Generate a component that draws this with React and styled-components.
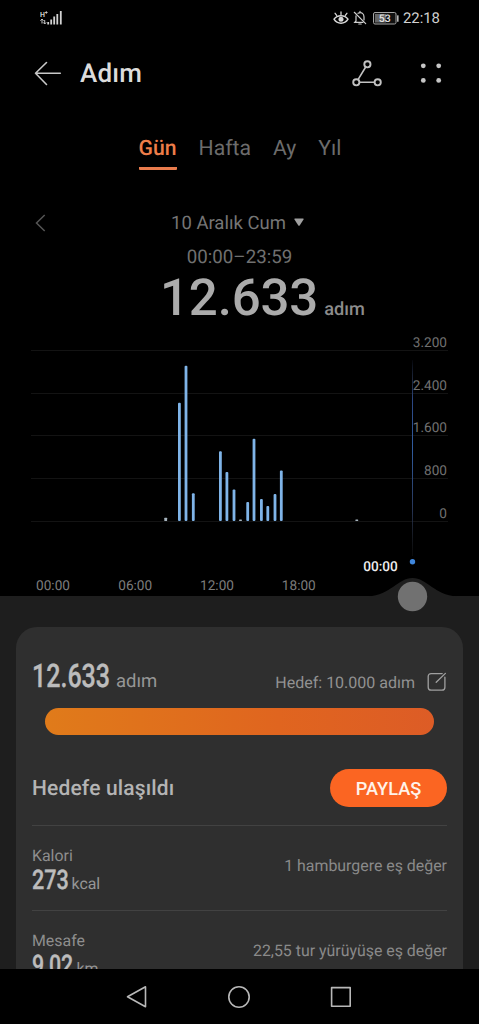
import React from "react";
import styled, { createGlobalStyle } from "styled-components";

const GlobalStyle = createGlobalStyle`
  * {
    box-sizing: border-box;
  }

  body {
    margin: 0;
    background: #000;
    font-family: Roboto, "Noto Sans", sans-serif;
    text-rendering: geometricPrecision;
  }

  svg {
    display: block;
    flex: none;
  }
`;

const Screen = styled.div`
  display: flex;
  flex-direction: column;
  width: 479px;
  height: 1024px;
  overflow: hidden;
  background: #000;
`;

const StatusBar = styled.div`
  display: flex;
  align-items: center;
  justify-content: space-between;
  flex: none;
  height: 36px;
  padding: 0 39px 0 40px;
`;

const StatusIcons = styled.div`
  display: flex;
  align-items: center;
`;

const Clock = styled.span`
  margin-left: 4px;
  font-size: 14.9px;
  line-height: 20px;
  color: #d2d2d2;
`;

const Header = styled.header`
  display: flex;
  align-items: center;
  flex: none;
  height: 76px;
  padding: 0 37px 0 34px;
`;

const Title = styled.h1`
  flex: 1;
  margin: 0 0 0 18px;
  font-size: 26px;
  font-weight: 500;
  letter-spacing: 0.2px;
  line-height: 32px;
  color: #dcdcdc;
`;

const HeaderActions = styled.div`
  display: flex;
  align-items: center;
  gap: 38px;
`;

const Tabs = styled.nav`
  display: flex;
  justify-content: center;
  flex: none;
  gap: 22px;
  height: 60px;
  padding: 22px 0 0 1px;
`;

const Tab = styled.a`
  height: 36px;
  padding-top: 1px;
  border-bottom: 3px solid ${(p) => (p.$active ? "#e97c4d" : "transparent")};
  border-radius: 1px;
  font-size: 21.2px;
  font-weight: ${(p) => (p.$active ? 500 : 400)};
  line-height: 27px;
  color: ${(p) => (p.$active ? "#ee7d49" : "#6c6c6c")};
`;

const DateRow = styled.div`
  display: flex;
  align-items: center;
  flex: none;
  height: 34px;
  margin-top: 34px;
  padding-left: 35px;
`;

const DateLabel = styled.div`
  display: flex;
  align-items: center;
  gap: 8px;
  margin-left: 125px;
  font-size: 18.5px;
  line-height: 24px;
  color: #757575;

  svg {
    margin-bottom: 2px;
  }
`;

const TimeRange = styled.div`
  flex: none;
  height: 34px;
  font-size: 18.7px;
  line-height: 34px;
  text-align: center;
  color: #707070;
`;

const Total = styled.div`
  display: flex;
  align-items: baseline;
  flex: none;
  height: 58px;
  padding-left: 160px;
  line-height: 50px;
`;

const TotalNumber = styled.span`
  font-size: 51px;
  font-weight: 500;
  letter-spacing: -0.15px;
  color: #ababab;
`;

const TotalUnit = styled.span`
  margin-left: 6px;
  font-size: 18.2px;
  font-weight: 500;
  color: #8c8c8c;
`;

const ChartSvg = styled.svg`
  position: relative;
  z-index: 1;
  overflow: visible;

  text {
    font-family: Roboto, "Noto Sans", sans-serif;
    font-size: 13.6px;
  }
`;

const Panel = styled.main`
  flex: 1;
  min-height: 0;
  padding: 31px 16px 0;
  overflow: hidden;
  background: #1e1e1e;
`;

const Card = styled.section`
  height: 400px;
  padding: 30px 16px 0;
  border-radius: 21px;
  background: #2f2f2f;
`;

const GoalRow = styled.div`
  display: flex;
  align-items: center;
  justify-content: space-between;
  height: 51px;
  padding-bottom: 9px;
`;

const Amount = styled.div`
  display: flex;
  align-items: baseline;
  line-height: 32px;
`;

const Narrow = styled.span`
  width: ${(p) => p.$width}px;
  font-size: ${(p) => p.$size}px;
  font-weight: 500;
  white-space: nowrap;
  color: #bcbcbc;
  -webkit-text-stroke: 0.4px #bcbcbc;
  transform: scaleX(${(p) => p.$scale});
  transform-origin: left;
`;

const Unit = styled.span`
  font-size: ${(p) => p.$size}px;
  color: #969696;
`;

const Goal = styled.div`
  display: flex;
  align-items: center;
  gap: 12px;
  padding-top: 10px;
  font-size: 16px;
  line-height: 22px;
  color: #929292;

  svg {
    margin-bottom: 2px;
  }
`;

const Progress = styled.div`
  height: 27px;
  margin: 0 13px;
  border-radius: 14px;
  background: linear-gradient(to right, #e07b1a, #e0651f 60%, #dd5c26);
`;

const ReachedRow = styled.div`
  display: flex;
  align-items: center;
  justify-content: space-between;
  height: 90px;
  padding-top: 16px;
`;

const Reached = styled.span`
  padding-top: 1px;
  font-size: 21px;
  font-weight: 500;
  letter-spacing: 0.15px;
  color: #b4b4b4;
`;

const ShareButton = styled.button`
  width: 117px;
  height: 38px;
  padding: 0;
  border: none;
  border-radius: 19px;
  background: #fb6522;
  font-family: inherit;
  font-size: 18.2px;
  font-weight: 500;
  color: #fff3ea;
`;

const Metric = styled.div`
  display: flex;
  justify-content: space-between;
  height: 85px;
  border-top: 1px solid #424242;
`;

const MetricName = styled.div`
  margin-top: 19px;
  font-size: 15.9px;
  line-height: 22px;
  color: #8e8e8e;
`;

const MetricValue = styled(Amount)`
  line-height: 26px;
`;

const MetricNote = styled.div`
  margin-top: 29px;
  font-size: 15.9px;
  line-height: 22px;
  color: #8a8a8a;
`;

const NavBar = styled.footer`
  display: flex;
  align-items: center;
  justify-content: center;
  flex: none;
  gap: 78px;
  height: 55px;
  padding-right: 1px;
  background: #000;
`;

const bars = [
  { x: 165.7, steps: 60, faint: true },
  { x: 179.4, steps: 2220 },
  { x: 186, steps: 2910 },
  { x: 193.3, steps: 520 },
  { x: 220.4, steps: 1310 },
  { x: 226.9, steps: 920 },
  { x: 234, steps: 590 },
  { x: 240.5, steps: 28, faint: true },
  { x: 247.7, steps: 355 },
  { x: 254, steps: 1545 },
  { x: 261.4, steps: 415 },
  { x: 267.8, steps: 280 },
  { x: 275, steps: 505 },
  { x: 281.3, steps: 945 },
  { x: 356.8, steps: 28, faint: true },
];

const yTicks = ["3.200", "2.400", "1.600", "800", "0"];

const xTicks = [
  { x: 53, label: "00:00" },
  { x: 135.2, label: "06:00" },
  { x: 217, label: "12:00" },
  { x: 298.8, label: "18:00" },
];

const BASELINE = 189;
const PLOT_HEIGHT = 170.6;

const StepsChart = () => (
  <ChartSvg width="479" height="264" viewBox="0 0 479 264">
    <defs>
      <linearGradient id="cursor" gradientUnits="userSpaceOnUse" x1="0" y1="28" x2="0" y2="224">
        <stop offset="0" stopColor="#2a3a60" stopOpacity="0.1" />
        <stop offset="0.12" stopColor="#222b40" />
        <stop offset="0.2" stopColor="#2b4580" />
        <stop offset="0.45" stopColor="#315c9f" />
        <stop offset="0.75" stopColor="#28375a" />
        <stop offset="1" stopColor="#222" stopOpacity="0.3" />
      </linearGradient>
    </defs>

    {yTicks.map((tick, i) => (
      <g key={tick}>
        <rect x="31" y={Math.round(18 + i * 42.7)} width="417" height="1" fill="#131313" />
        <text x="447" y={15.2 + i * 42.6} textAnchor="end" fill="#707070">
          {tick}
        </text>
      </g>
    ))}

    {bars.map((bar) => {
      const height = (bar.steps / 3200) * PLOT_HEIGHT;
      return (
        <rect
          key={bar.x}
          x={bar.x - 1.4}
          y={BASELINE - height}
          width="2.8"
          height={height}
          rx={bar.faint ? 0.5 : 1}
          fill={bar.faint ? "#a5b3bd" : "#7fb4e8"}
        />
      );
    })}

    <rect x="412" y="28" width="1" height="196" fill="url(#cursor)" />
    <circle cx="412.5" cy="229.7" r="2.7" fill="#3f86dc" />

    {xTicks.map((tick) => (
      <text key={tick.x} x={tick.x} y="257.7" textAnchor="middle" fill="#7c7c7c">
        {tick.label}
      </text>
    ))}
    <text x="380.5" y="239" textAnchor="middle" fontWeight="500" fill="#efefef">
      00:00
    </text>

    <path d="M368 264.5C391 263 398 246 412.5 246S434 263 457 264.5Z" fill="#1e1e1e" />
    <circle cx="412.5" cy="264.5" r="14.7" fill="#717171" />
  </ChartSvg>
);

const SignalIcon = () => (
  <svg width="23" height="16" viewBox="0 0 23 16">
    <text x="0" y="7" fontFamily="Roboto, sans-serif" fontSize="7" fontWeight="700" fill="#c8c8c8">
      H
    </text>
    <path d="M5 2.5h2.6M6.3 1.2v2.6" stroke="#c8c8c8" strokeWidth="0.9" />
    <path d="M2 9v4.5M.4 10.7 2 9l1.6 1.7M4.7 10v4M3.2 12.4l1.5 1.6 1.5-1.6" stroke="#c8c8c8" strokeWidth="1" fill="none" />
    <path d="M8.2 14.5v-2.5M11.2 14.5v-5M14.2 14.5V6.5M17.3 14.5V4M20.8 14.5V1" stroke="#d2d2d2" strokeWidth="1.8" />
  </svg>
);

const EyeIcon = () => (
  <svg width="16" height="16" viewBox="0 0 16 16" fill="none" stroke="#d8d8d8" strokeLinecap="round">
    <path d="M1 9.2C4.2 4.5 11.8 4.5 15 9.2 11.8 14.6 4.2 14.6 1 9.2Z" strokeWidth="1.4" />
    <circle cx="8" cy="9.3" r="2.5" fill="#d8d8d8" stroke="none" />
    <path d="M8 4.5V2M3.7 5.3 2.1 3.3M12.3 5.3l1.6-2" strokeWidth="1.3" />
  </svg>
);

const MutedBellIcon = () => (
  <svg width="14" height="16" viewBox="0 0 14 16" fill="none" stroke="#cfcfcf" strokeWidth="1.2" strokeLinecap="round">
    <path d="M5 3.3C9 1.3 11 4.2 11 7v3M3 5.8V11l-1.2 1.3H10M7 1.3v1M5.8 14h2.4" />
    <path d="M1.3 2.3 12.7 13.6" />
  </svg>
);

const BatteryIcon = () => (
  <svg width="26" height="13" viewBox="0 0 26 13">
    <rect x="0.5" y="0.5" width="22.5" height="11.5" rx="1.5" fill="#111" stroke="#a5a5a5" />
    <rect x="2" y="2" width="11" height="8.5" fill="#666" />
    <rect x="24" y="3.2" width="1.6" height="6.5" rx="0.5" fill="#b8b8b8" />
    <text x="11.7" y="10" textAnchor="middle" fontFamily="Roboto, sans-serif" fontSize="10.5" fontWeight="500" fill="#e2e2e2">
      53
    </text>
  </svg>
);

const BackIcon = () => (
  <svg width="28" height="26" viewBox="0 0 28 26" fill="none" stroke="#c8c8c8" strokeWidth="1.6" strokeLinecap="round" strokeLinejoin="round">
    <path d="M12.5 1.5 1.5 12.3 12.5 23.5M1.5 12.3H26.3" />
  </svg>
);

const RouteIcon = () => (
  <svg width="30" height="28" viewBox="0 0 30 28" fill="none" stroke="#c2c2c2" strokeWidth="1.9">
    <circle cx="15.4" cy="4.3" r="3.1" />
    <circle cx="4.3" cy="22.3" r="3.1" />
    <circle cx="25.7" cy="22.3" r="3.1" />
    <path d="M13.7 7 6 19.7M7.4 22.3h15.2" strokeWidth="1.6" />
  </svg>
);

const DotsIcon = () => (
  <svg width="22" height="22" viewBox="0 0 22 22" fill="#c6c6c6">
    <circle cx="3.3" cy="2.8" r="2.4" />
    <circle cx="18.7" cy="2.8" r="2.4" />
    <circle cx="3.3" cy="17.4" r="2.4" />
    <circle cx="18.7" cy="17.4" r="2.4" />
  </svg>
);

const EditIcon = () => (
  <svg width="20" height="20" viewBox="0 0 20 20" fill="none" stroke="#a0a0a0" strokeWidth="1.3" strokeLinecap="round">
    <path d="M15.2 1.6H4.2Q1.2 1.6 1.2 4.6V15.2Q1.2 18.2 4.2 18.2H14.9Q17.9 18.2 17.9 15.2V5.2" />
    <path d="M9.2 10.3 18.4 1.4" />
  </svg>
);

const App = () => {
  return (
    <>
      <GlobalStyle />
      <Screen>
        <StatusBar>
          <SignalIcon />
          <StatusIcons>
            <EyeIcon />
            <span style={{ width: 4 }} />
            <MutedBellIcon />
            <span style={{ width: 6 }} />
            <BatteryIcon />
            <Clock>22:18</Clock>
          </StatusIcons>
        </StatusBar>

        <Header>
          <BackIcon />
          <Title>Adım</Title>
          <HeaderActions>
            <RouteIcon />
            <DotsIcon />
          </HeaderActions>
        </Header>

        <Tabs>
          <Tab $active>Gün</Tab>
          <Tab>Hafta</Tab>
          <Tab>Ay</Tab>
          <Tab>Yıl</Tab>
        </Tabs>

        <DateRow>
          <svg width="11" height="18" viewBox="0 0 11 18" fill="none" stroke="#555" strokeWidth="1.5">
            <path d="M9.7 1 1.5 9l8.2 8" />
          </svg>
          <DateLabel>
            10 Aralık Cum
            <svg width="10" height="9" viewBox="0 0 10 9" fill="#a0a0a0">
              <path d="M1 .5h8q1 0 .5 1L5.7 7.4q-.7.9-1.4 0L.5 1.5Q0 .5 1 .5Z" />
            </svg>
          </DateLabel>
        </DateRow>
        <TimeRange>00:00–23:59</TimeRange>
        <Total>
          <TotalNumber>12.633</TotalNumber>
          <TotalUnit>adım</TotalUnit>
        </Total>

        <StepsChart />

        <Panel>
          <Card>
            <GoalRow>
              <Amount>
                <Narrow $size={32.5} $width={84} $scale={0.77}>12.633</Narrow>
                <Unit $size={18.5}>adım</Unit>
              </Amount>
              <Goal>
                Hedef: 10.000 adım
                <EditIcon />
              </Goal>
            </GoalRow>
            <Progress />
            <ReachedRow>
              <Reached>Hedefe ulaşıldı</Reached>
              <ShareButton>PAYLAŞ</ShareButton>
            </ReachedRow>
            <Metric>
              <div>
                <MetricName>Kalori</MetricName>
                <MetricValue>
                  <Narrow $size={27} $width={39.5} $scale={0.8}>273</Narrow>
                  <Unit $size={15.9}>kcal</Unit>
                </MetricValue>
              </div>
              <MetricNote>1 hamburgere eş değer</MetricNote>
            </Metric>
            <Metric>
              <div>
                <MetricName>Mesafe</MetricName>
                <MetricValue>
                  <Narrow $size={27} $width={44.5} $scale={0.79}>9,02</Narrow>
                  <Unit $size={15.9}>km</Unit>
                </MetricValue>
              </div>
              <MetricNote>22,55 tur yürüyüşe eş değer</MetricNote>
            </Metric>
          </Card>
        </Panel>

        <NavBar>
          <svg width="24" height="24" viewBox="0 0 24 24" fill="none" stroke="#b8b8b8" strokeWidth="1.6" strokeLinejoin="round">
            <path d="M20.5 1.8v20L2.5 11.8Z" />
          </svg>
          <svg width="24" height="24" viewBox="0 0 24 24" fill="none" stroke="#b8b8b8" strokeWidth="1.6">
            <circle cx="12" cy="12" r="10.2" />
          </svg>
          <svg width="24" height="24" viewBox="0 0 24 24" fill="none" stroke="#b8b8b8" strokeWidth="1.6" strokeLinejoin="round">
            <rect x="2.6" y="2.6" width="18.6" height="18.6" />
          </svg>
        </NavBar>
      </Screen>
    </>
  );
};

export default App;
